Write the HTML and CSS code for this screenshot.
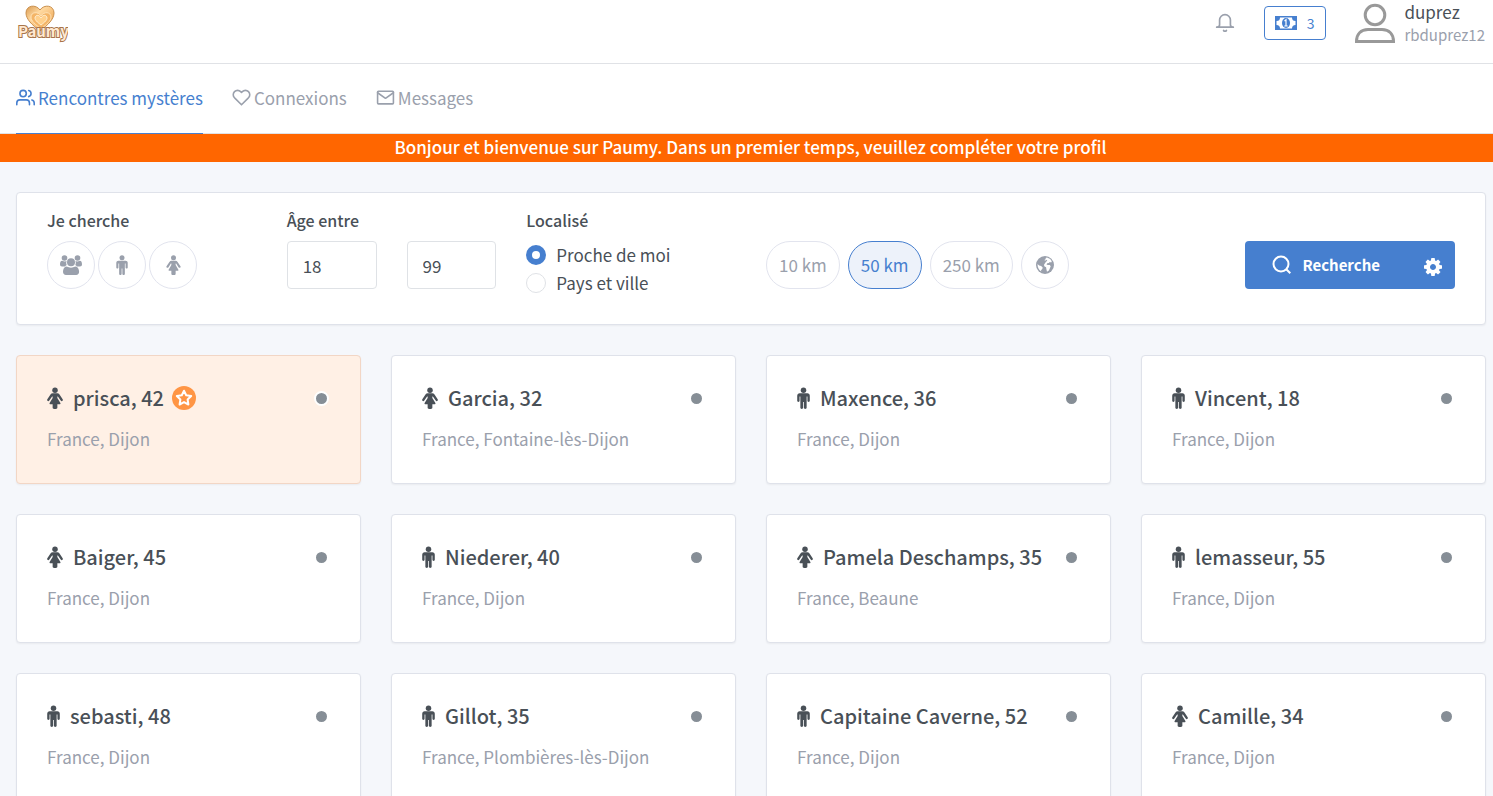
FILE: index.html
```html
<!DOCTYPE html>
<html lang="fr">
<head>
<meta charset="utf-8">
<meta name="viewport" content="width=device-width, initial-scale=1">
<title>Paumy</title>
<link rel="stylesheet" href="styles.css">
</head>
<body>
<svg class="sprite" aria-hidden="true">
  <symbol id="male" viewBox="0 0 1024 1792"><path d="M1024 704v416q0 40-28 68t-68 28-68-28-28-68v-352h-64v912q0 46-33 79t-79 33-79-33-33-79v-464h-64v464q0 46-33 79t-79 33-79-33-33-79v-912h-64v352q0 40-28 68t-68 28-68-28-28-68v-416q0-80 56-136t136-56h640q80 0 136 56t56 136z"/><circle cx="512" cy="256" r="224"/></symbol>
  <symbol id="female" viewBox="0 0 1280 1792"><path d="M1280 1056q0 40-28 68t-68 28q-51 0-80-43l-227-341h-45v132l247 411q9 15 9 33 0 26-19 45t-45 19h-192v272q0 46-33 79t-79 33h-160q-46 0-79-33t-33-79v-272h-192q-26 0-45-19t-19-45q0-18 9-33l247-411v-132h-45l-227 341q-29 43-80 43-40 0-68-28t-28-68q0-29 16-53l256-384q73-107 176-107h384q103 0 176 107l256 384q16 24 16 53z"/><circle cx="640" cy="256" r="224"/></symbol>
</svg>

<header class="topbar">
  <a class="logo" href="#" aria-label="Paumy">
    <svg width="52" height="40" viewBox="0 0 52 40">
      <defs><linearGradient id="gold" x1="0" y1="0" x2="1" y2="1"><stop offset="0" stop-color="#d9994f"/><stop offset=".35" stop-color="#ffd9a0"/><stop offset="1" stop-color="#e8963c"/></linearGradient></defs>
      <path d="M24 26C16 20 10 14 10 8c0-8 10-9 14-3 4-6 14-5 14 3 0 6-6 12-14 18z" fill="url(#gold)" stroke="#c98f4c"/>
      <path d="M25 24c-6-5-10-8-10-12 0-5 7-6 10-1 3-5 10-4 10 1 0 4-4 7-10 12z" fill="#f4b567" stroke="#ffe3b8"/>
      <path d="M25 20c-4-3-6-5-6-7 0-3 4-4 6 0 2-4 6-3 6 0 0 2-2 4-6 7z" fill="#ffd08c" stroke="#fff0d4"/>
      <text class="logo-text" x="2" y="32">Paumy</text>
    </svg>
  </a>
  <div class="account">
    <button class="bell" aria-label="Notifications"><svg class="line" width="20" height="20" viewBox="0 0 24 24"><path d="M2 17h20c-2.500 0-3.500-1.500-3.500-3V8.500a6.500 6.500 0 0 0-13 0V14c0 1.500-1 3-3.500 3M13.700 21a2 2 0 0 1-3.400 0"/></svg></button>
    <button class="credits"><svg width="22" height="14" viewBox="0 0 22 14" fill="currentColor"><path fill-rule="evenodd" d="M0 0h22v14H0zM5 1.500A3.500 3.500 0 0 1 1.500 5v4A3.500 3.500 0 0 1 5 12.500h12A3.500 3.500 0 0 1 20.500 9V5A3.500 3.500 0 0 1 17 1.500z"/><ellipse cx="11" cy="7" rx="4" ry="5"/><path d="M9.500 5l1.500-1.200v6M9.300 10h3.400" fill="none" stroke="#fff" stroke-width="1.200"/></svg><span>3</span></button>
    <a class="profile" href="#">
      <svg width="42" height="42" viewBox="0 0 42 42" fill="none" stroke="#999" stroke-width="3"><circle cx="21" cy="13" r="9.800"/><path d="M2.500 39.500C2.500 32 7 27.500 14 27.500h14c7 0 11.500 4.500 11.500 12z"/></svg>
      <span class="who"><span class="name">duprez</span><span class="handle">rbduprez12</span></span>
    </a>
  </div>
</header>

<nav class="tabs">
  <a class="tab active" href="#"><svg class="line" width="19" height="19" viewBox="0 0 24 24"><path d="M17 21v-2a4 4 0 0 0-4-4H5a4 4 0 0 0-4 4v2"/><circle cx="9" cy="7" r="4"/><path d="M23 21v-2a4 4 0 0 0-3-3.870M16 3.130a4 4 0 0 1 0 7.750"/></svg>Rencontres mystères</a>
  <a class="tab" href="#"><svg class="line" width="19" height="19" viewBox="0 0 24 24"><path d="M20.840 4.610a5.500 5.500 0 0 0-7.780 0L12 5.670l-1.060-1.060a5.500 5.500 0 0 0-7.780 7.780l1.060 1.060L12 21.230l7.780-7.780 1.060-1.060a5.500 5.500 0 0 0 0-7.780z"/></svg>Connexions</a>
  <a class="tab" href="#"><svg class="line" width="19" height="19" viewBox="0 0 24 24"><rect x="2" y="4" width="20" height="16" rx="1"/><path d="M22 6l-10 7L2 6"/></svg>Messages</a>
</nav>

<p class="notice">Bonjour et bienvenue sur Paumy. Dans un premier temps, veuillez compléter votre profil</p>

<main class="page">
  <form class="search">
    <div class="field span2">
      <span class="label">Je cherche</span>
      <div class="round-group">
        <button type="button" class="pill round" aria-label="Tous"><svg width="22" height="20" viewBox="0 0 22 20" fill="currentColor"><circle cx="4.500" cy="3" r="2.800"/><circle cx="17.500" cy="3" r="2.800"/><path d="M2.200 5.800C.6 5.800 0 7.500 0 9.500c0 1.300.8 1.900 2 1.900h3.200c.8-.7 1-1 1.500-1.300-.7-1.500-.6-2.900-.1-4-1.500.6-2.700.4-4.400-.3zM19.800 5.800c1.600 0 2.200 1.700 2.200 3.700 0 1.300-.8 1.900-2 1.900h-3.200c-.8-.7-1-1-1.500-1.300.7-1.500.6-2.900.1-4 1.500.6 2.700.4 4.400-.3z"/><circle cx="11" cy="7.300" r="4"/><path d="M6.600 11.500c2.900 1.500 5.900 1.500 8.800 0 2.500.2 3.700 2.700 3.700 5.300 0 2-1.100 3.200-3 3.200H6c-1.900 0-3-1.200-3-3.200 0-2.600 1.100-5.100 3.600-5.300z"/></svg></button>
        <button type="button" class="pill round" aria-label="Homme"><svg class="glyph" width="12" height="20"><use href="#male"/></svg></button>
        <button type="button" class="pill round" aria-label="Femme"><svg class="glyph" width="15" height="20"><use href="#female"/></svg></button>
      </div>
    </div>
    <div class="field">
      <label class="label" for="age-min">Âge entre</label>
      <input class="age" id="age-min" type="text" value="18">
    </div>
    <div class="field bottom">
      <input class="age" type="text" value="99" aria-label="Âge maximum">
    </div>
    <div class="field span2">
      <span class="label">Localisé</span>
      <div class="choices">
        <label class="choice"><input type="radio" name="place" checked>Proche de moi</label>
        <label class="choice"><input type="radio" name="place">Pays et ville</label>
      </div>
    </div>
    <div class="field span4 bottom">
      <div class="distances">
        <button type="button" class="pill">10 km</button>
        <button type="button" class="pill selected">50 km</button>
        <button type="button" class="pill">250 km</button>
        <button type="button" class="pill round" aria-label="Monde"><svg width="18" height="18" viewBox="0 0 18 18"><circle cx="9" cy="9" r="9" fill="currentColor"/><path fill="#fff" d="M9.500 2l1.500-.6 3.200 1.500 1.600 2.300-.6 1.300-1.400-.5-1 .9-1.600.4-.7 1.300 1.300.4 1.900.1 1 1.200-.8 2-1 2.100-1.900 1.400-.6-2.600-.3-2-1.800-1-.3-1.500 1-1.500 1-1.500 1.300-1-.9-.9-1.300.9-.7-.6 1.500-1zM1.500 8l1.700 1.500 1.900.6 1.600 1.500-.4 1.500-1.300 1.100.3 1.300C2.900 14 1.500 11.500 1.500 8z"/></svg></button>
      </div>
    </div>
    <div class="field span2 bottom">
      <div class="submit">
        <button class="go"><svg width="20" height="20" viewBox="0 0 20 20" fill="none" stroke="#fff" stroke-width="2"><circle cx="9" cy="9" r="7.500"/><path d="M14.500 14.500l3.800 3.800"/></svg>Recherche</button>
        <button type="button" class="settings" aria-label="Options"><svg width="18" height="18" viewBox="0 128 1536 1536" fill="#fff"><path d="M1024 896q0-106-75-181t-181-75-181 75-75 181 75 181 181 75 181-75 75-181zm512-109v222q0 12-8 23t-20 13l-185 28q-19 54-39 91 35 50 107 138 10 12 10 25t-9 23q-27 37-99 108t-94 71q-12 0-26-9l-138-108q-44 23-91 38-16 136-29 186-7 28-36 28h-222q-14 0-24.500-8.500t-11.500-21.500l-28-184q-49-16-90-37l-141 107q-10 9-25 9-14 0-25-11-126-114-165-168-7-10-7-23 0-12 8-23 15-21 51-66.500t54-70.500q-27-50-41-99l-183-27q-13-2-21-12.500t-8-23.500v-222q0-12 8-23t19-13l186-28q14-46 39-92-40-57-107-138-10-12-10-24 0-10 9-23 26-36 98.500-107.500t94.500-71.500q13 0 26 10l138 107q44-23 91-38 16-136 29-186 7-28 36-28h222q14 0 24.500 8.500t11.500 21.500l28 184q49 16 90 37l142-107q9-9 24-9 13 0 25 10 129 119 165 170 7 8 7 22 0 12-8 23-15 21-51 66.500t-54 70.500q26 50 41 98l183 28q13 2 21 12.500t8 23.500z"/></svg></button>
      </div>
    </div>
  </form>

  <section class="people">
    <article class="card featured"><h2><svg class="glyph f"><use href="#female"/></svg>prisca, 42<span class="star"><svg width="18" height="18" viewBox="0 0 18 18"><path d="M9 1.700l2.200 4.600 5 .7-3.600 3.500.8 5L9 13.100l-4.400 2.400.8-5L1.800 7l5-.7z" fill="none" stroke="#fff" stroke-width="2" stroke-linejoin="round"/></svg></span><i class="status"></i></h2><p>France, Dijon</p></article>
    <article class="card"><h2><svg class="glyph f"><use href="#female"/></svg>Garcia, 32<i class="status"></i></h2><p>France, Fontaine-lès-Dijon</p></article>
    <article class="card"><h2><svg class="glyph m"><use href="#male"/></svg>Maxence, 36<i class="status"></i></h2><p>France, Dijon</p></article>
    <article class="card"><h2><svg class="glyph m"><use href="#male"/></svg>Vincent, 18<i class="status"></i></h2><p>France, Dijon</p></article>
    <article class="card"><h2><svg class="glyph f"><use href="#female"/></svg>Baiger, 45<i class="status"></i></h2><p>France, Dijon</p></article>
    <article class="card"><h2><svg class="glyph m"><use href="#male"/></svg>Niederer, 40<i class="status"></i></h2><p>France, Dijon</p></article>
    <article class="card"><h2><svg class="glyph f"><use href="#female"/></svg>Pamela Deschamps, 35<i class="status"></i></h2><p>France, Beaune</p></article>
    <article class="card"><h2><svg class="glyph m"><use href="#male"/></svg>lemasseur, 55<i class="status"></i></h2><p>France, Dijon</p></article>
    <article class="card"><h2><svg class="glyph m"><use href="#male"/></svg>sebasti, 48<i class="status"></i></h2><p>France, Dijon</p></article>
    <article class="card"><h2><svg class="glyph m"><use href="#male"/></svg>Gillot, 35<i class="status"></i></h2><p>France, Plombières-lès-Dijon</p></article>
    <article class="card"><h2><svg class="glyph m"><use href="#male"/></svg>Capitaine Caverne, 52<i class="status"></i></h2><p>France, Dijon</p></article>
    <article class="card"><h2><svg class="glyph f"><use href="#female"/></svg>Camille, 34<i class="status"></i></h2><p>France, Dijon</p></article>
  </section>
</main>
</body>
</html>
```
FILE: styles.css
```css
* { box-sizing: border-box; }
body {
  margin: 0;
  background: #f5f7fb;
  color: #495057;
  font: 400 17px/28px "Noto Sans CJK SC", "Open Sans", sans-serif;
}
a { color: inherit; text-decoration: none; }
button, input { font: inherit; color: inherit; margin: 0; }
button { padding: 0; border: 0; background: none; cursor: pointer; }
svg { flex: none; }
.sprite { display: none; }
.glyph { fill: currentColor; }
.line { fill: none; stroke: currentColor; stroke-width: 2; stroke-linecap: round; stroke-linejoin: round; }

.topbar {
  display: flex;
  justify-content: space-between;
  align-items: center;
  padding: 0 8px 17px 16px;
  border-bottom: 1px solid #e0e2e6;
  background: #fff;
}
.logo { display: flex; padding-top: 4px; }
.logo-text {
  font: 700 15px "Noto Sans CJK SC", sans-serif;
  fill: #ffe9d2;
  stroke: #a8744a;
  stroke-width: 2px;
  paint-order: stroke;
}
.account { display: flex; align-items: center; }
.bell { display: flex; margin-right: 29px; color: #9aa0ac; }
.credits {
  display: flex;
  align-items: center;
  gap: 10px;
  height: 34px;
  margin-right: 28px;
  padding: 0 11px 0 10px;
  border: 1px solid #467fcf;
  border-radius: 4px;
  color: #467fcf;
  font-size: 14px;
}
.profile { display: flex; align-items: center; gap: 8px; }
.who { display: flex; flex-direction: column; line-height: 23px; }
.name { font-size: 17px; }
.handle { color: #9aa0ac; font-size: 15px; }

.tabs {
  display: flex;
  gap: 29px;
  padding: 0 16px;
  border-bottom: 1px solid #e0e2e6;
  background: #fff;
  color: #9aa0ac;
}
.tab {
  display: flex;
  align-items: center;
  gap: 3px;
  height: 70px;
  margin-bottom: -1px;
  padding-bottom: 2px;
  border-bottom: 1px solid transparent;
}
.tab.active { border-color: #467fcf; color: #467fcf; }

.notice {
  margin: 0;
  padding: 0 0 2px 8px;
  background: #f60;
  color: #fff;
  font-weight: 500;
  line-height: 26px;
  text-align: center;
}

.page { padding: 30px 7px 30px 16px; }
.search, .card {
  border: 1px solid #dfe2ea;
  border-radius: 4px;
  background: #fff;
  box-shadow: 0 1px 2px rgba(0, 0, 0, .05);
}
.search {
  display: grid;
  grid-template-columns: repeat(12, minmax(0, 1fr));
  column-gap: 30px;
  margin-bottom: 30px;
  padding: 13px 30px 35px;
}
.field { display: flex; flex-direction: column; gap: 7px; }
.bottom { justify-content: flex-end; }
.span2 { grid-column: span 2; }
.span4 { grid-column: span 4; }
.label { font-weight: 500; font-size: 16px; }
.round-group { display: flex; gap: 3px; }
.distances { display: flex; gap: 8px; }
.pill {
  display: flex;
  align-items: center;
  justify-content: center;
  height: 48px;
  padding: 0 12px;
  border: 1px solid #e2e4ee;
  border-radius: 24px;
  color: #9aa0ac;
}
.round { width: 48px; padding: 0; }
.selected { border-color: #467fcf; background: #edf2fa; color: #467fcf; }
.age {
  width: 100%;
  height: 48px;
  padding: 0 15px;
  border: 1px solid #dfe2e6;
  border-radius: 4px;
  background: #fff;
}
.choices { display: flex; flex-direction: column; height: 48px; }
.choice { display: flex; align-items: center; gap: 10px; }
.choice input {
  width: 20px;
  height: 20px;
  border: 1px solid #dfe2e6;
  border-radius: 50%;
  background: #fff;
  appearance: none;
}
.choice input:checked { border: 6px solid #467fcf; }
.submit { display: flex; height: 48px; border-radius: 4px; background: #467fcf; color: #fff; }
.go {
  display: flex;
  flex: 1;
  align-items: center;
  justify-content: center;
  gap: 10px;
  padding-right: 4px;
  font-weight: 700;
  font-size: 15px;
}
.settings { display: flex; align-items: center; padding: 3px 13px 0; }

.people {
  display: grid;
  grid-template-columns: repeat(4, minmax(0, 1fr));
  gap: 30px;
}
.card { padding: 27px 30px 30px; }
.card h2 {
  display: flex;
  align-items: center;
  margin: 0 0 12px;
  font-weight: 500;
  font-size: 20px;
  line-height: 30px;
}
.card h2 .glyph { margin-right: 10px; }
.f { width: 16px; height: 22px; }
.m { width: 13px; height: 22px; }
.card p { margin: 0; color: #9aa0ac; }
.featured { border-color: #f2d6c5; background: #fff0e5; }
.star {
  display: flex;
  align-items: center;
  justify-content: center;
  width: 24px;
  height: 24px;
  margin-left: 8px;
  border-radius: 50%;
  background: #ff9544;
}
.status {
  width: 15px;
  height: 15px;
  margin: 0 1px 0 auto;
  border: 2px solid #fff;
  border-radius: 50%;
  background: #868e96;
}
```
